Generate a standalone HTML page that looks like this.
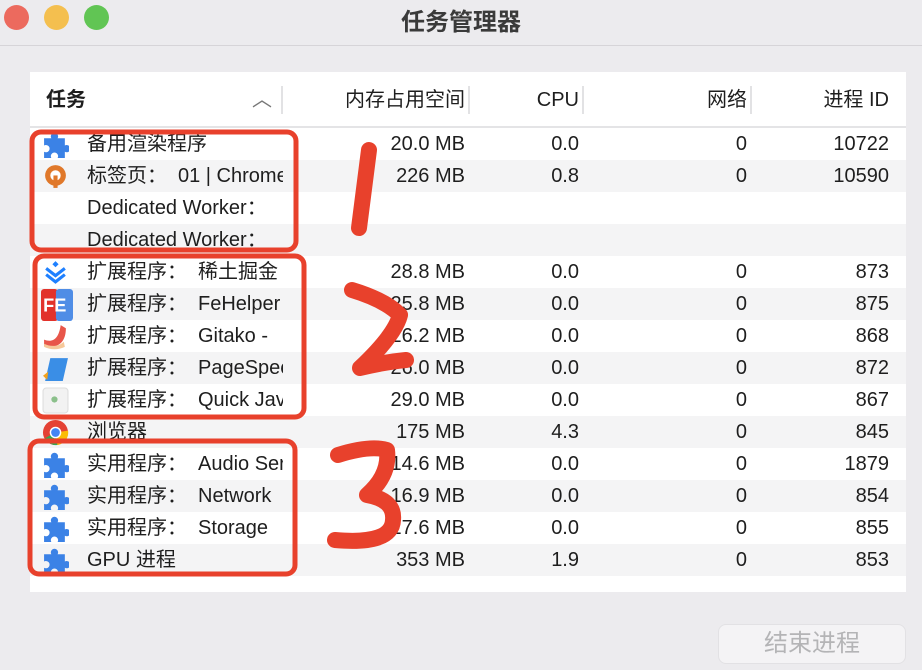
<!DOCTYPE html><html><head><meta charset="utf-8"><style>
*{margin:0;padding:0;box-sizing:border-box}
body{width:922px;height:670px;background:#ecebee;font-family:"Liberation Sans","Noto Sans CJK SC",sans-serif;position:relative;overflow:hidden;color:#1e1e1e}
.tb{position:absolute;left:0;top:0;width:922px;height:46px;border-bottom:1px solid #d6d4d8}
.dot{position:absolute;top:5px;width:25px;height:25px;border-radius:50%}
.title{position:absolute;top:2px;left:0;width:922px;text-align:center;font-size:24px;font-weight:bold;color:#3a3a3a}
.panel{position:absolute;left:30px;top:72px;width:876px;height:520px;background:#fff}
.hd{position:absolute;left:0;top:0;width:876px;height:56px;border-bottom:2px solid #e4e4e6;font-size:20px}
.hd span{position:absolute;top:14px;line-height:28px}
.sep{position:absolute;top:14px;width:2px;height:28px;background:#e2e2e4}
.row{position:absolute;left:0;width:876px;height:32px;font-size:20px}
.row.g{background:#f4f4f5}
.row span{position:absolute;top:0;line-height:32px;white-space:nowrap}
.t{left:57px;width:196px;overflow:hidden}
.m{right:441px}.c{right:327px}.n{right:159px}.i{right:17px}
i{font-style:normal;display:inline-block;width:31px}
.ic{position:absolute;left:12px;top:3px;width:27px;height:27px}
.btn{position:absolute;left:718px;top:624px;width:188px;height:40px;border-radius:8px;background:#f4f3f5;border:1px solid #e2e1e4;color:#b4b4b6;font-size:24px;text-align:center;line-height:37px}
</style></head><body>
<div class="tb"><div class="dot" style="left:4px;background:#ec6a5e"></div><div class="dot" style="left:44px;background:#f4bf4f"></div><div class="dot" style="left:84px;background:#61c554"></div><div class="title">任务管理器</div></div>
<div class="panel">
<div class="hd"><span style="left:16px;font-weight:bold">任务</span><span style="left:222px;color:#777">︿</span><div class="sep" style="left:251px"></div>
<span style="right:441px">内存占用空间</span><div class="sep" style="left:438px"></div>
<span style="right:327px">CPU</span><div class="sep" style="left:552px"></div>
<span style="right:159px">网络</span><div class="sep" style="left:720px"></div>
<span style="right:17px">进程 ID</span></div>
<svg width="0" height="0" style="position:absolute"><defs><path id="pz" d="M2 7h7a3.5 3.5 0 1 1 6 0h7v7a3.5 3.5 0 1 1 0 6v6H15a3.5 3.5 0 1 0-6 0H2v-6a3.5 3.5 0 1 0 0-6z" fill="#3b82e6"/></defs></svg>
<div class="row" style="top:56px"><svg class="ic" viewBox="0 0 26 26"><use href="#pz"/></svg><span class="t">备用渲染程序</span><span class="m">20.0 MB</span><span class="c">0.0</span><span class="n">0</span><span class="i">10722</span></div>
<div class="row g" style="top:88px"><svg class="ic" viewBox="0 0 26 26"><circle cx="13" cy="12" r="10" fill="#e0782a"/><circle cx="13" cy="12" r="5" fill="#fff"/><rect x="11" y="12" width="4" height="12" fill="#e0782a"/></svg><span class="t">标签页<i>：</i>01 | Chrome</span><span class="m">226 MB</span><span class="c">0.8</span><span class="n">0</span><span class="i">10590</span></div>
<div class="row" style="top:120px"><span class="t">Dedicated Worker：</span></div>
<div class="row g" style="top:152px"><span class="t">Dedicated Worker：</span></div>
<div class="row" style="top:184px"><svg class="ic" viewBox="0 0 26 26"><path d="M4 9l9 7 9-7M4 15l9 7 9-7" stroke="#1e80ff" stroke-width="3" fill="none"/><path d="M13 2l3 3-3 3-3-3z" fill="#1e80ff"/></svg><span class="t">扩展程序<i>：</i>稀土掘金</span><span class="m">28.8 MB</span><span class="c">0.0</span><span class="n">0</span><span class="i">873</span></div>
<div class="row g" style="top:216px"><svg class="ic" viewBox="0 0 30 30" style="left:11px;top:1px;width:32px;height:32px"><rect x="0" y="0" width="16" height="30" rx="3" fill="#e2322b"/><rect x="14" y="0" width="16" height="30" rx="3" fill="#4f8de6"/><text x="2" y="21" font-size="17" font-weight="bold" fill="#fff" font-family="Liberation Sans">FE</text></svg><span class="t">扩展程序<i>：</i>FeHelper</span><span class="m">25.8 MB</span><span class="c">0.0</span><span class="n">0</span><span class="i">875</span></div>
<div class="row" style="top:248px"><svg class="ic" viewBox="0 0 26 26"><path d="M2 16c8 3 14 0 16-14l5 3c0 14-8 20-21 17z" fill="#e8564a"/><path d="M2 20c6 3 14 3 19-2l1 5c-6 3-14 3-20 0z" fill="#f6c89a"/></svg><span class="t">扩展程序<i>：</i>Gitako -</span><span class="m">26.2 MB</span><span class="c">0.0</span><span class="n">0</span><span class="i">868</span></div>
<div class="row g" style="top:280px"><svg class="ic" viewBox="0 0 26 26"><path d="M8 3h17l-5 22H3z" fill="#3a8ee6"/><path d="M1 20l5-4-1 8z" fill="#f3a21b"/></svg><span class="t">扩展程序<i>：</i>PageSpeed</span><span class="m">26.0 MB</span><span class="c">0.0</span><span class="n">0</span><span class="i">872</span></div>
<div class="row" style="top:312px"><svg class="ic" viewBox="0 0 26 26"><rect x="1" y="1" width="24" height="24" rx="3" fill="#f2f2f2" stroke="#ddd"/><circle cx="12" cy="12" r="3" fill="#8bc08b"/></svg><span class="t">扩展程序<i>：</i>Quick Java</span><span class="m">29.0 MB</span><span class="c">0.0</span><span class="n">0</span><span class="i">867</span></div>
<div class="row g" style="top:344px"><svg class="ic" viewBox="0 0 28 28"><circle cx="14" cy="14" r="13" fill="#e44134"/><path d="M14 14L3 20A13 13 0 0 0 16 27z" fill="#34a853"/><path d="M14 14l13-2A13 13 0 0 1 16 27z" fill="#fbbc05"/><circle cx="14" cy="14" r="6" fill="#fff"/><circle cx="14" cy="14" r="4.5" fill="#4285f4"/></svg><span class="t">浏览器</span><span class="m">175 MB</span><span class="c">4.3</span><span class="n">0</span><span class="i">845</span></div>
<div class="row" style="top:376px"><svg class="ic" viewBox="0 0 26 26"><use href="#pz"/></svg><span class="t">实用程序<i>：</i>Audio Service</span><span class="m">14.6 MB</span><span class="c">0.0</span><span class="n">0</span><span class="i">1879</span></div>
<div class="row g" style="top:408px"><svg class="ic" viewBox="0 0 26 26"><use href="#pz"/></svg><span class="t">实用程序<i>：</i>Network</span><span class="m">16.9 MB</span><span class="c">0.0</span><span class="n">0</span><span class="i">854</span></div>
<div class="row" style="top:440px"><svg class="ic" viewBox="0 0 26 26"><use href="#pz"/></svg><span class="t">实用程序<i>：</i>Storage</span><span class="m">17.6 MB</span><span class="c">0.0</span><span class="n">0</span><span class="i">855</span></div>
<div class="row g" style="top:472px"><svg class="ic" viewBox="0 0 26 26"><use href="#pz"/></svg><span class="t">GPU 进程</span><span class="m">353 MB</span><span class="c">1.9</span><span class="n">0</span><span class="i">853</span></div>
</div>
<svg width="922" height="670" style="position:absolute;left:0;top:0" fill="none" stroke="#e8412c" stroke-linecap="round" stroke-linejoin="round">
<rect x="32" y="132" width="264" height="118" rx="9" stroke-width="5"/>
<rect x="35" y="256" width="269" height="161" rx="9" stroke-width="5"/>
<rect x="30" y="441" width="265" height="133" rx="9" stroke-width="5"/>
<path d="M369 150L359 228" stroke-width="16"/>
<path d="M352 290Q385 300 400 315Q395 335 360 368Q385 362 406 360" stroke-width="16"/>
<path d="M338 455Q370 445 387 450Q390 475 367 495Q395 500 393 520Q392 545 335 540" stroke-width="16"/>
</svg>
<div class="btn">结束进程</div>
</body></html>
